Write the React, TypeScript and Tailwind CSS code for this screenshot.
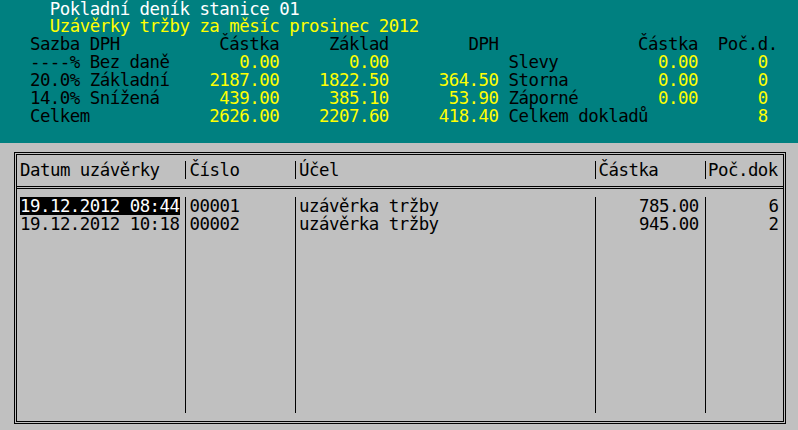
import React from "react";

type Seg = { col?: number; end?: number; text: string; c: "w" | "y" | "k" };

const colorCls: Record<string, string> = {
  w: "text-white",
  y: "text-[#ffff00]",
  k: "text-black",
};

function Line({ segs }: { segs: Seg[] }) {
  let pos = 0;
  const parts: React.ReactNode[] = [];
  segs.forEach((s, i) => {
    const start = s.col !== undefined ? s.col : (s.end as number) - [...s.text].length + 1;
    const gap = Math.max(0, start - pos);
    parts.push(
      <span key={i} className={colorCls[s.c]}>
        {" ".repeat(gap) + s.text}
      </span>
    );
    pos = start + [...s.text].length;
  });
  return <div className="h-[17.9px] leading-[17.9px] whitespace-pre">{parts}</div>;
}

const top: Seg[][] = [
  [{ col: 5, text: "Pokladní deník stanice 01", c: "w" }],
  [{ col: 5, text: "Uzávěrky tržby za měsíc prosinec 2012", c: "y" }],
  [
    { col: 3, text: "Sazba DPH", c: "k" },
    { end: 27, text: "Částka", c: "k" },
    { end: 38, text: "Základ", c: "k" },
    { end: 49, text: "DPH", c: "k" },
    { end: 69, text: "Částka", c: "k" },
    { end: 77, text: "Poč.d.", c: "k" },
  ],
  [
    { col: 3, text: "----% Bez daně", c: "k" },
    { end: 27, text: "0.00", c: "y" },
    { end: 38, text: "0.00", c: "y" },
    { col: 51, text: "Slevy", c: "k" },
    { end: 69, text: "0.00", c: "y" },
    { end: 76, text: "0", c: "y" },
  ],
  [
    { col: 3, text: "20.0% Základní", c: "k" },
    { end: 27, text: "2187.00", c: "y" },
    { end: 38, text: "1822.50", c: "y" },
    { end: 49, text: "364.50", c: "y" },
    { col: 51, text: "Storna", c: "k" },
    { end: 69, text: "0.00", c: "y" },
    { end: 76, text: "0", c: "y" },
  ],
  [
    { col: 3, text: "14.0% Snížená", c: "k" },
    { end: 27, text: "439.00", c: "y" },
    { end: 38, text: "385.10", c: "y" },
    { end: 49, text: "53.90", c: "y" },
    { col: 51, text: "Záporné", c: "k" },
    { end: 69, text: "0.00", c: "y" },
    { end: 76, text: "0", c: "y" },
  ],
  [
    { col: 3, text: "Celkem", c: "k" },
    { end: 27, text: "2626.00", c: "y" },
    { end: 38, text: "2207.60", c: "y" },
    { end: 49, text: "418.40", c: "y" },
    { col: 51, text: "Celkem dokladů", c: "k" },
    { end: 76, text: "8", c: "y" },
  ],
];

const rows = [
  { date: "19.12.2012 08:44", num: "00001", ucel: "uzávěrka tržby", castka: "785.00", poc: "6", sel: true },
  { date: "19.12.2012 10:18", num: "00002", ucel: "uzávěrka tržby", castka: "945.00", poc: "2", sel: false },
];

export default function App() {
  return (
    <div
      className="w-[798px] h-[430px] overflow-hidden bg-[#c0c0c0] text-[17.4px] tracking-[-0.5px] text-black"
      style={{ fontFamily: '"DejaVu Sans Mono", "Liberation Mono", monospace' }}
    >
      <div className="h-[143px] bg-[#008080] overflow-hidden pt-[0.5px]">
        {top.map((segs, i) => (
          <Line key={i} segs={segs} />
        ))}
      </div>

      <div className="ml-[14px] mt-[9px] w-[772px] h-[272px] border-[3px] border-double border-black flex flex-col">
        <div className="pt-[6px] pb-[7px] border-b-[3px] border-double border-black">
          <div className="flex h-[18px] leading-[18px] whitespace-pre">
            <div className="w-[168px] pl-[3px]">Datum uzávěrky</div>
            <div className="w-[110px] border-l border-black pl-[3.5px]">Číslo</div>
            <div className="w-[300px] border-l border-black pl-[3px]">Účel</div>
            <div className="w-[110px] border-l border-black pl-[2.5px]">Částka</div>
            <div className="w-[78px] border-l border-black pl-[2px]">Poč.dok</div>
          </div>
        </div>
        <div className="pt-[8px]">
          <div className="flex h-[216px] leading-[18px] whitespace-pre">
            <div className="w-[168px] pl-[3px]">
              {rows.map((r, i) => (
                <div key={i} className="h-[18px]">
                  <span className={r.sel ? "inline-block h-[18px] bg-black text-white" : "inline-block h-[18px]"}>
                    {r.date}
                  </span>
                </div>
              ))}
            </div>
            <div className="w-[110px] border-l border-black pl-[3.5px]">
              {rows.map((r, i) => (
                <div key={i} className="h-[18px]">{r.num}</div>
              ))}
            </div>
            <div className="w-[300px] border-l border-black pl-[3px]">
              {rows.map((r, i) => (
                <div key={i} className="h-[18px]">{r.ucel}</div>
              ))}
            </div>
            <div className="w-[110px] border-l border-black pr-[6.2px] text-right">
              {rows.map((r, i) => (
                <div key={i} className="h-[18px]">{r.castka}</div>
              ))}
            </div>
            <div className="w-[78px] border-l border-black pr-[4.5px] text-right">
              {rows.map((r, i) => (
                <div key={i} className="h-[18px]">{r.poc}</div>
              ))}
            </div>
          </div>
        </div>
      </div>
    </div>
  );
}
